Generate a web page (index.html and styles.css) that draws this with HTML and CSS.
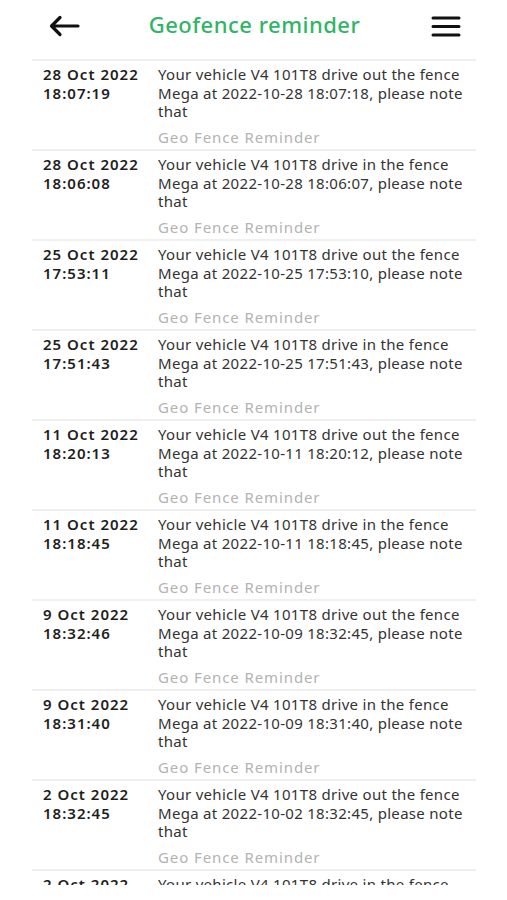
FILE: index.html
```html
<!DOCTYPE html>
<html lang="en">
<head>
<meta charset="utf-8">
<title>Geofence reminder</title>
<link rel="stylesheet" href="styles.css">
</head>
<body>
<div class="screen">
  <header class="topbar">
    <button class="icon-btn back" aria-label="Back">
      <svg width="32" height="22" viewBox="0 0 32 22"><path d="M30 11H4M12 2.5L3.5 11L12 19.5" fill="none" stroke="#111" stroke-width="3.2" stroke-linecap="round" stroke-linejoin="round"/></svg>
    </button>
    <h1 class="title">Geofence reminder</h1>
    <button class="icon-btn menu" aria-label="Menu">
      <svg width="30" height="22" viewBox="0 0 30 22"><path d="M2 3H28M2 11.5H28M2 20H28" fill="none" stroke="#111" stroke-width="3" stroke-linecap="round"/></svg>
    </button>
  </header>
  <main class="list">
    <div class="row"><div class="date">28 Oct 2022<br>18:07:19</div><div class="body"><p class="msg">Your vehicle V4 101T8 drive out the fence<br>Mega at 2022-10-28 18:07:18, please note<br>that</p><p class="tag">Geo Fence Reminder</p></div></div>
    <div class="row"><div class="date">28 Oct 2022<br>18:06:08</div><div class="body"><p class="msg">Your vehicle V4 101T8 drive in the fence<br>Mega at 2022-10-28 18:06:07, please note<br>that</p><p class="tag">Geo Fence Reminder</p></div></div>
    <div class="row"><div class="date">25 Oct 2022<br>17:53:11</div><div class="body"><p class="msg">Your vehicle V4 101T8 drive out the fence<br>Mega at 2022-10-25 17:53:10, please note<br>that</p><p class="tag">Geo Fence Reminder</p></div></div>
    <div class="row"><div class="date">25 Oct 2022<br>17:51:43</div><div class="body"><p class="msg">Your vehicle V4 101T8 drive in the fence<br>Mega at 2022-10-25 17:51:43, please note<br>that</p><p class="tag">Geo Fence Reminder</p></div></div>
    <div class="row"><div class="date">11 Oct 2022<br>18:20:13</div><div class="body"><p class="msg">Your vehicle V4 101T8 drive out the fence<br>Mega at 2022-10-11 18:20:12, please note<br>that</p><p class="tag">Geo Fence Reminder</p></div></div>
    <div class="row"><div class="date">11 Oct 2022<br>18:18:45</div><div class="body"><p class="msg">Your vehicle V4 101T8 drive in the fence<br>Mega at 2022-10-11 18:18:45, please note<br>that</p><p class="tag">Geo Fence Reminder</p></div></div>
    <div class="row"><div class="date">9 Oct 2022<br>18:32:46</div><div class="body"><p class="msg">Your vehicle V4 101T8 drive out the fence<br>Mega at 2022-10-09 18:32:45, please note<br>that</p><p class="tag">Geo Fence Reminder</p></div></div>
    <div class="row"><div class="date">9 Oct 2022<br>18:31:40</div><div class="body"><p class="msg">Your vehicle V4 101T8 drive in the fence<br>Mega at 2022-10-09 18:31:40, please note<br>that</p><p class="tag">Geo Fence Reminder</p></div></div>
    <div class="row"><div class="date">2 Oct 2022<br>18:32:45</div><div class="body"><p class="msg">Your vehicle V4 101T8 drive out the fence<br>Mega at 2022-10-02 18:32:45, please note<br>that</p><p class="tag">Geo Fence Reminder</p></div></div>
    <div class="row"><div class="date">2 Oct 2022<br>18:31:20</div><div class="body"><p class="msg">Your vehicle V4 101T8 drive in the fence<br>Mega at 2022-10-02 18:31:20, please note<br>that</p><p class="tag">Geo Fence Reminder</p></div></div>
  </main>
</div>
</body>
</html>
```
FILE: styles.css
```css
* { box-sizing: border-box; }
html, body {
  margin: 0;
  padding: 0;
  background: #fff;
}
body {
  font-family: "Noto Sans", "Open Sans", sans-serif;
  color: #222;
}
.screen {
  width: 507px;
  height: 900px;
  overflow: hidden;
  display: flex;
  flex-direction: column;
}
.topbar {
  height: 59px;
  flex: none;
  display: flex;
  align-items: flex-start;
  justify-content: space-between;
  padding: 13px 46px 0 48px;
}
.icon-btn {
  border: 0;
  background: none;
  padding: 0;
  margin: 0;
  display: flex;
}
.back { margin-top: 2px; }
.menu { margin-top: 2px; }
.title {
  margin: -1px 0 0;
  font-size: 22px;
  line-height: 24px;
  font-weight: 500;
  color: #2fb565;
  letter-spacing: 0.5px;
  padding-right: 2px;
}
.list {
  height: 826px;
  flex: none;
  overflow: hidden;
  margin: 0 31px 0 32px;
  border-top: 2px solid #efefef;
}
.row {
  display: grid;
  grid-template-columns: 115px 1fr;
  height: 90px;
  padding: 4px 0 0 11px;
  border-bottom: 2px solid #efefef;
  font-size: 15px;
  line-height: 18.5px;
}
.date {
  font-weight: 600;
  color: #1e1e1e;
  letter-spacing: 1px;
}
.body { min-width: 0; }
.msg {
  margin: 0;
  color: #333;
  letter-spacing: 0.3px;
  white-space: nowrap;
}
.tag {
  margin: 7px 0 0;
  color: #b3b3b3;
  letter-spacing: 0.9px;
}
```
